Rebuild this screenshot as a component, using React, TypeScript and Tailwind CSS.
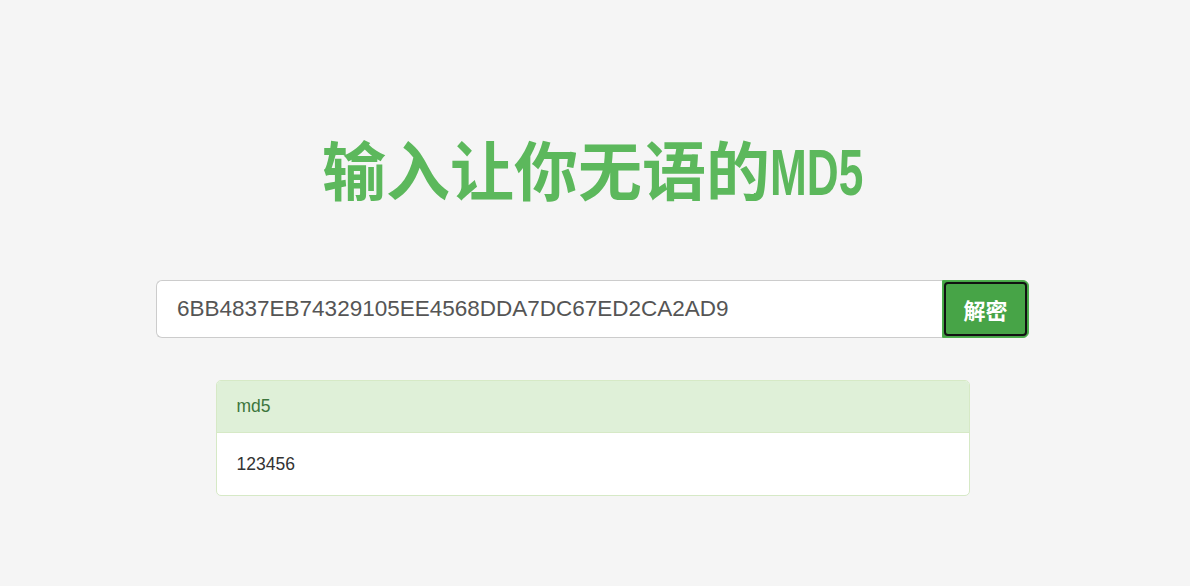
export default function App() {
  return (
    <div
      className="min-h-[586px] w-full bg-[#f5f5f5]"
      style={{ fontFamily: '"Liberation Sans", "Noto Sans CJK SC", sans-serif' }}
    >
      <div className="flex flex-col items-center pr-[5px] pt-[122px]">
        <h1
          className="m-0 whitespace-nowrap text-[64px] font-bold leading-[90px] text-[#5cb85c]"
          style={{ fontFamily: '"Noto Sans CJK SC", sans-serif' }}
        >
          输入让你无语的
          <span
            className="mr-[-42px] inline-block origin-left scale-x-[0.69]"
            style={{ fontFamily: '"Liberation Sans", sans-serif' }}
          >
            MD5
          </span>
        </h1>

        <div className="mt-[62px] flex h-[58px] w-[873px]">
          <input
            className="h-full flex-1 rounded-l-[6px] border border-r-0 border-[#cccccc] bg-white px-5 text-[22.5px] text-[#555555] outline-none"
            defaultValue="6BB4837EB74329105EE4568DDA7DC67ED2CA2AD9"
          />
          <button className="h-full w-[87px] rounded-r-[6px] border border-[#4cae4c] bg-[#47a447] p-px">
            <span
              className="flex h-full w-full items-center justify-center rounded-[4px] border-2 border-[#111111] text-[22px] font-bold text-white"
              style={{ fontFamily: '"Noto Sans CJK SC", sans-serif' }}
            >
              解密
            </span>
          </button>
        </div>

        <div className="mt-[42px] w-[754px] overflow-hidden rounded-[5px] border border-[#d6e9c6] bg-white">
          <div className="flex h-[52px] items-center border-b border-[#d6e9c6] bg-[#dff0d8] px-5 text-[17.5px] text-[#3c763d]">
            md5
          </div>
          <div className="flex h-[62px] items-center px-5 text-[17.5px] text-[#333333]">123456</div>
        </div>
      </div>
    </div>
  );
}
